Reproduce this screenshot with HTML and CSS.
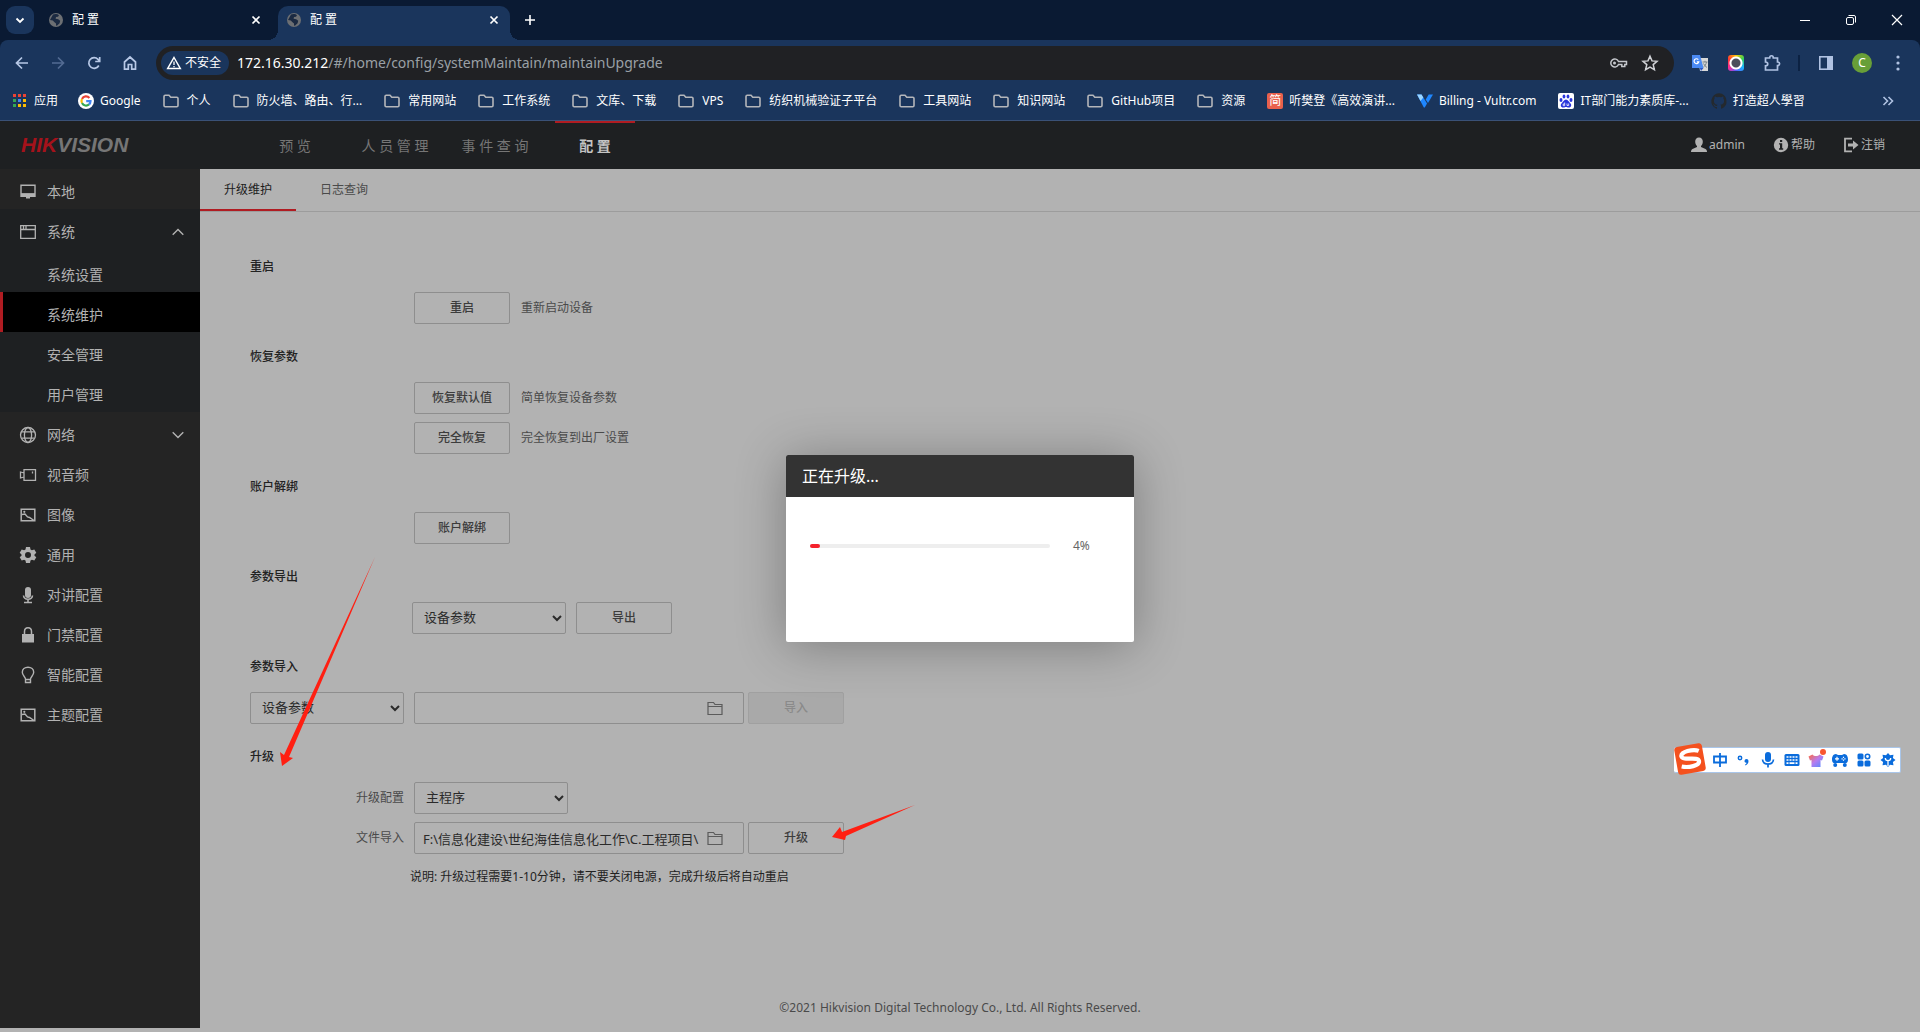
FILE: index.html
```html
<!DOCTYPE html>
<html lang="zh-CN">
<head>
<meta charset="utf-8">
<title>配 置</title>
<link rel="stylesheet" href="styles.css">
</head>
<body>
<svg class="defs" aria-hidden="true">
  <symbol id="i-folder" viewBox="0 0 16 16"><path d="M1 3.500c0-.8.4-1.200 1.200-1.200H6l1.800 2h6c.8 0 1.200.4 1.200 1.200v7c0 .8-.4 1.200-1.200 1.200H2.200c-.8 0-1.200-.4-1.200-1.200z" fill="none" stroke="#b4b6ba" stroke-width="1.600"/></symbol>
  <symbol id="i-globe" viewBox="0 0 16 16"><circle cx="8" cy="8" r="7" fill="#6c6f73"/><path d="M5 2.500c2-1 5-.6 6 .8l-1 1.400-2 .4-.4 1.600 2.600.6 2 1.400-.6 2.600-2.400 2.200-1.200.2v-2.200L6.200 10 4.800 8.400 2 8z" fill="#1b2a42"/></symbol>
  <symbol id="i-x" viewBox="0 0 16 16"><path d="M4.500 4.500l7 7M11.500 4.500l-7 7" stroke="currentColor" stroke-width="1.700" fill="none"/></symbol>
  <symbol id="i-pic" viewBox="0 0 18 18"><path d="M2.200 3.200h13.600v11.600H2.200z" fill="none" stroke="currentColor" stroke-width="1.500"/><path d="M3 8.500l3-.5 2.500 3 2 .5 4.500 3" fill="none" stroke="currentColor" stroke-width="1.400"/><circle cx="5.300" cy="5.800" r="1.100" fill="currentColor"/></symbol>
  <symbol id="i-file" viewBox="0 0 16 16"><path d="M1 14.500V2.500h5.500L8 4.500H15v10zM1 6.500h14" fill="none" stroke="#5b5b5b" stroke-width="1.200"/></symbol>
</svg>

<div class="browser">
  <div class="tabstrip">
    <button class="tab-search" aria-label="搜索标签页"><svg viewBox="0 0 16 16" class="ic16"><path d="M4.500 6.500L8 10l3.500-3.500" fill="none" stroke="#fff" stroke-width="1.800"/></svg></button>
    <div class="tab"><svg class="ic16"><use href="#i-globe"/></svg><span class="tab-title">配 置</span><button class="tab-close" aria-label="关闭"><svg class="ic16"><use href="#i-x"/></svg></button></div>
    <div class="tab tab-active"><svg class="ic16"><use href="#i-globe"/></svg><span class="tab-title">配 置</span><button class="tab-close" aria-label="关闭"><svg class="ic16"><use href="#i-x"/></svg></button></div>
    <button class="new-tab" aria-label="新标签页"><svg class="ic16" viewBox="0 0 16 16"><path d="M8 3v10M3 8h10" stroke="#fff" stroke-width="1.600"/></svg></button>
    <div class="win-controls">
      <button aria-label="最小化"><svg class="ic16" viewBox="0 0 16 16"><path d="M3 8.500h10" stroke="#fff"/></svg></button>
      <button aria-label="还原"><svg class="ic16" viewBox="0 0 16 16"><rect x="3.500" y="5.500" width="7" height="7" rx="1.500" fill="none" stroke="#fff"/><path d="M5.500 3.500h5.500a1.500 1.500 0 0 1 1.500 1.500v5.500" fill="none" stroke="#fff"/></svg></button>
      <button aria-label="关闭窗口"><svg class="ic16" viewBox="0 0 16 16"><path d="M3 3l10 10M13 3L3 13" stroke="#fff" stroke-width="1.200"/></svg></button>
    </div>
  </div>

  <div class="toolbar">
    <div class="nav-buttons">
      <button aria-label="后退"><svg class="ic16" viewBox="0 0 16 16"><path d="M14 8H3M8 2.500L2.500 8 8 13.500" fill="none" stroke="#b7c8e6" stroke-width="1.700"/></svg></button>
      <button aria-label="前进"><svg class="ic16" viewBox="0 0 16 16"><path d="M2 8h11M8 2.500L13.500 8 8 13.500" fill="none" stroke="#536b92" stroke-width="1.700"/></svg></button>
      <button aria-label="刷新"><svg class="ic16" viewBox="0 0 16 16"><path d="M12.800 10.500A5.300 5.300 0 1 1 12 4.400l1.500 1.600M13.700 2v4.500H9.200" fill="none" stroke="#b7c8e6" stroke-width="1.700"/></svg></button>
      <button aria-label="主页"><svg class="ic16" viewBox="0 0 16 16"><path d="M2.500 7L8 2l5.500 5v7.200H9.700V9.500H6.300v4.700H2.500z" fill="none" stroke="#b7c8e6" stroke-width="1.700"/></svg></button>
    </div>
    <div class="omnibox">
      <button class="security"><svg class="ic16" viewBox="0 0 16 16"><path d="M8 2.500L14.300 13.500H1.700z" fill="none" stroke="#fff" stroke-width="1.500"/><path d="M8 6.500v3.500M8 11v1.300" stroke="#fff" stroke-width="1.300"/></svg>不安全</button>
      <div class="url"><span class="host">172.16.30.212</span>/#/home/config/systemMaintain/maintainUpgrade</div>
      <button aria-label="密码"><svg class="ic18" viewBox="0 0 18 18"><path d="M9.500 7.500h8v3h-1.700v2h-3v-2H9.500a4 4 0 1 1 0-3z" fill="none" stroke="#c4c7cc" stroke-width="1.500"/><circle cx="5.500" cy="9" r="1.500" fill="#c4c7cc"/></svg></button>
      <button aria-label="收藏"><svg class="ic18" viewBox="0 0 18 18"><path d="M9 2.200l2 4.700 5 .4-3.800 3.300 1.200 5L9 13l-4.400 2.600 1.200-5L2 7.300l5-.4z" fill="none" stroke="#d0d2d6" stroke-width="1.500"/></svg></button>
    </div>
    <div class="extensions">
      <button aria-label="翻译"><svg class="ic18" viewBox="0 0 18 18"><path d="M7 4h10v13H9z" fill="#d8d8d8"/><path d="M1 1h8l3.500 13H1z" fill="#4a8af4"/><path d="M8.800 14h3.700L10 17z" fill="#2a56c6"/><path d="M7.300 5.600a2.400 2.400 0 1 0 .5 2.200H5.800" fill="none" stroke="#fff" stroke-width="1.200"/><path d="M11.500 8h5M14 6.800V8M15.500 8c-.5 2.500-1.500 4-3 5M12.500 9.500c.8 1.800 2 3 3.500 4" fill="none" stroke="#7a858c"/></svg></button>
      <button class="shot" aria-label="截图"><span></span></button>
      <button aria-label="扩展程序"><svg class="ic18" viewBox="0 0 18 18"><path d="M2.500 4h4.200c0-3 3.600-3 3.600 0h4.200v4c2.800 0 2.800 3.500 0 3.500v4.500h-12v-4.200c3 0 3-3.800 0-3.800z" fill="none" stroke="#b0c2e2" stroke-width="1.700"/></svg></button>
      <span class="divider"></span>
      <button aria-label="侧边栏"><svg class="ic18" viewBox="0 0 18 18"><rect x="2.800" y="2.800" width="12.400" height="12.400" fill="none" stroke="#b0c2e2" stroke-width="1.600"/><path d="M10 3h5v12h-5z" fill="#b0c2e2"/></svg></button>
      <button class="avatar">C</button>
      <button aria-label="菜单"><svg class="ic18" viewBox="0 0 18 18" fill="#b0c2e2"><circle cx="9" cy="3" r="1.600"/><circle cx="9" cy="9" r="1.600"/><circle cx="9" cy="15" r="1.600"/></svg></button>
    </div>
  </div>

  <nav class="bookmarks">
    <a href="#" class="apps"><svg class="ic16" viewBox="0 0 16 16"><path d="M1 1h3v3H1zM6 1h3v3H6zM11 1h3v3h-3z" fill="#ea4335"/><path d="M1 6h3v3H1z" fill="#34a853"/><path d="M6 6h3v3H6z" fill="#4285f4"/><path d="M11 6h3v3h-3zM11 11h3v3h-3zM6 11h3v3H6z" fill="#fbbc04"/><path d="M1 11h3v3H1z" fill="#34a853"/></svg>应用</a>
    <a href="#" class="site"><svg class="ic16" viewBox="0 0 16 16"><circle cx="8" cy="8" r="8" fill="#fff"/><g fill="none" stroke-width="2.200"><path d="M11.400 4.900A4.500 4.500 0 0 0 4 5.900" stroke="#ea4335"/><path d="M4 5.900a4.500 4.500 0 0 0 0 4.200" stroke="#fbbc04"/><path d="M4 10.100a4.500 4.500 0 0 0 7 1.300" stroke="#34a853"/><path d="M11 11.500A4.500 4.500 0 0 0 12.500 8.200H8.200" stroke="#4285f4"/></g></svg>Google</a>
    <a href="#"><svg class="ic16"><use href="#i-folder"/></svg>个人</a>
    <a href="#"><svg class="ic16"><use href="#i-folder"/></svg>防火墙、路由、行...</a>
    <a href="#"><svg class="ic16"><use href="#i-folder"/></svg>常用网站</a>
    <a href="#"><svg class="ic16"><use href="#i-folder"/></svg>工作系统</a>
    <a href="#"><svg class="ic16"><use href="#i-folder"/></svg>文库、下载</a>
    <a href="#"><svg class="ic16"><use href="#i-folder"/></svg>VPS</a>
    <a href="#"><svg class="ic16"><use href="#i-folder"/></svg>纺织机械验证子平台</a>
    <a href="#"><svg class="ic16"><use href="#i-folder"/></svg>工具网站</a>
    <a href="#"><svg class="ic16"><use href="#i-folder"/></svg>知识网站</a>
    <a href="#"><svg class="ic16"><use href="#i-folder"/></svg>GitHub项目</a>
    <a href="#"><svg class="ic16"><use href="#i-folder"/></svg>资源</a>
    <a href="#" class="site"><span class="jian">简</span>听樊登《高效演讲...</a>
    <a href="#" class="site"><svg class="ic16" viewBox="0 0 16 16"><path d="M0 1.500h4.500L10 10.500 7.800 14.500h-1z" fill="#1f87ff"/><path d="M0 1.500h4.500L6.300 4.500 3.500 8z" fill="#9ad4ff"/><path d="M8.700 6.500l3-5H16L11 10z" fill="#1f87ff"/></svg>Billing - Vultr.com</a>
    <a href="#" class="site"><svg class="ic16" viewBox="0 0 16 16"><rect width="16" height="16" rx="2" fill="#fff"/><g fill="#2a36dc"><ellipse cx="3" cy="7" rx="1.500" ry="2"/><ellipse cx="6" cy="3.500" rx="1.400" ry="2"/><ellipse cx="10" cy="3.500" rx="1.400" ry="2"/><ellipse cx="13" cy="7" rx="1.500" ry="2"/><path d="M8 6.500c2 0 3 2.500 4.500 4s.5 4-1.500 4-2-.5-3-.5-1 .5-3 .5-3-2.500-1.500-4 2.500-4 4.500-4z"/></g><path d="M6.700 9.500v3.200H5.200v-1.700h1.500M9 10.500v2h1.700v-2" fill="none" stroke="#fff" stroke-width=".8"/></svg>IT部门能力素质库-...</a>
    <a href="#" class="site"><svg class="ic16" viewBox="0 0 16 16"><path d="M8 .3a8 8 0 0 0-2.500 15.500c.4 0 .5-.2.500-.4v-1.500c-2.200.5-2.700-1-2.700-1-.4-.9-.9-1.100-.9-1.100-.7-.5.1-.5.100-.5.800.1 1.200.8 1.200.8.700 1.200 1.900.9 2.300.7.1-.5.300-.9.500-1.100-1.800-.2-3.600-.9-3.600-4 0-.9.300-1.600.8-2.100-.1-.2-.4-1 .1-2.100 0 0 .7-.2 2.200.8a7.400 7.400 0 0 1 4 0c1.500-1 2.200-.8 2.200-.8.400 1.100.2 1.900.1 2.100.5.600.8 1.300.8 2.100 0 3.100-1.900 3.700-3.700 3.900.3.300.6.800.6 1.500v2.200c0 .2.100.5.500.4A8 8 0 0 0 8 .3z" fill="#24292e"/></svg>打造超人學習</a>
    <button class="more" aria-label="更多书签"><svg class="ic16" viewBox="0 0 16 16"><path d="M3.500 4L7.500 8l-4 4M8.500 4l4 4-4 4" fill="none" stroke="#b0c2e2" stroke-width="1.600"/></svg></button>
  </nav>
</div>

<header class="app-header">
  <div class="logo"><span>HIK</span>VISION</div>
  <nav class="main-nav">
    <a href="#">预 览</a>
    <a href="#">人 员 管 理</a>
    <a href="#">事 件 查 询</a>
    <a href="#" class="current">配 置</a>
  </nav>
  <div class="account">
    <a href="#"><svg class="ic16" viewBox="0 0 16 16" fill="currentColor"><path d="M8 .5c2.500 0 3.800 1.800 3.800 4.200 0 1.800-.8 3.300-1.800 4.300v1l4.500 2c1 .5 1.500 1.500 1.500 3H0c0-1.500.5-2.500 1.500-3L6 10V9C5 8 4.200 6.500 4.200 4.700 4.200 2.300 5.500.5 8 .5z"/></svg>admin</a>
    <a href="#"><svg class="ic16" viewBox="0 0 16 16"><circle cx="8" cy="8" r="7.200" fill="currentColor"/><path d="M7 3h2.200v2H7zM6 6.300h3.200v5h1V12.700H6v-1.400h1V7.600H6z" fill="#1e2022"/></svg>帮助</a>
    <a href="#"><svg class="ic16" viewBox="0 0 16 16"><path d="M9 1.700H2v12.600h7" fill="none" stroke="currentColor" stroke-width="1.800"/><path d="M5 6.500h5V3.500L15.500 8 10 12.500v-3H5z" fill="currentColor"/></svg>注销</a>
  </div>
</header>

<div class="app-body">
  <nav class="sidebar">
    <a href="#" class="item"><svg class="ic18" viewBox="0 0 18 18"><path d="M2 2.200h14v11H2zM2 11h14" fill="none" stroke="currentColor" stroke-width="1.400"/><path d="M2 10.500h14v3H11v2H7v-2H2z" fill="currentColor"/></svg>本地</a>
    <div class="group">
      <a href="#" class="item"><svg class="ic18" viewBox="0 0 18 18"><path d="M1.700 2.700h14.600v12.600H1.700zM1.700 6.500h14.600M4.500 3v3M7 3v3" fill="none" stroke="currentColor" stroke-width="1.300"/></svg>系统<svg class="caret" viewBox="0 0 12 8"><path d="M.7 6.800L6 1.500l5.300 5.300" fill="none" stroke="currentColor" stroke-width="1.400"/></svg></a>
      <div class="children">
        <a href="#">系统设置</a>
        <a href="#" class="selected">系统维护</a>
        <a href="#">安全管理</a>
        <a href="#">用户管理</a>
      </div>
    </div>
    <a href="#" class="item"><svg class="ic18" viewBox="0 0 18 18"><g fill="none" stroke="currentColor" stroke-width="1.300"><circle cx="9" cy="9" r="7.500"/><ellipse cx="9" cy="9" rx="3.600" ry="7.500"/><path d="M2.500 5.800h13M2.500 12.200h13"/></g></svg>网络<svg class="caret" viewBox="0 0 12 8"><path d="M.7 1.200L6 6.500l5.300-5.300" fill="none" stroke="currentColor" stroke-width="1.400"/></svg></a>
    <a href="#" class="item"><svg class="ic18" viewBox="0 0 18 18"><path d="M5 3.700h11.500v10.600H5zM5 7L1.500 6v6L5 11M13.500 5.500v2" fill="none" stroke="currentColor" stroke-width="1.300"/></svg>视音频</a>
    <a href="#" class="item"><svg class="ic18"><use href="#i-pic"/></svg>图像</a>
    <a href="#" class="item"><svg class="ic18" viewBox="0 0 18 18"><path fill="currentColor" fill-rule="evenodd" d="M7 1h4l.5 2.400 1.400.8 2.400-.8 2 3.400L15.500 8.500v1.200l1.800 1.500-2 3.400-2.400-.8-1.400.8L11 17H7l-.5-2.400-1.400-.8-2.400.8-2-3.400L2.500 9.700V8.500L.7 6.800l2-3.400 2.400.8 1.400-.8zM9 6a3 3 0 1 0 0 6 3 3 0 0 0 0-6z"/></svg>通用</a>
    <a href="#" class="item"><svg class="ic18" viewBox="0 0 18 18"><rect x="6" y="1" width="6" height="11" rx="3" fill="currentColor"/><path d="M4.500 9.500c.5 5 8.500 5 9 0M9 13v3M5 16.500h8" fill="none" stroke="currentColor" stroke-width="1.600"/></svg>对讲配置</a>
    <a href="#" class="item"><svg class="ic18" viewBox="0 0 18 18"><path d="M3 8h12v8.500H3z" fill="currentColor"/><path d="M5.500 8V5.500c0-5 7-5 7 0V8" fill="none" stroke="currentColor" stroke-width="1.500"/></svg>门禁配置</a>
    <a href="#" class="item"><svg class="ic18" viewBox="0 0 18 18"><path d="M6.500 13c0-2-3.200-3.500-3.200-6.700C3.300 3.200 5.800 1.300 9 1.300s5.700 1.900 5.700 5c0 3.200-3.200 4.700-3.200 6.700v3.500h-5zM6.500 13.500h5" fill="none" stroke="currentColor" stroke-width="1.400"/></svg>智能配置</a>
    <a href="#" class="item"><svg class="ic18"><use href="#i-pic"/></svg>主题配置</a>
  </nav>

  <main class="content">
    <nav class="tabs"><a href="#" class="on">升级维护</a><a href="#">日志查询</a></nav>
    <form class="sections">
      <section>
        <h2>重启</h2>
        <div class="row indent"><button type="button" class="btn">重启</button><span class="hint">重新启动设备</span></div>
      </section>
      <section>
        <h2>恢复参数</h2>
        <div class="row indent"><button type="button" class="btn">恢复默认值</button><span class="hint">简单恢复设备参数</span></div>
        <div class="row indent"><button type="button" class="btn">完全恢复</button><span class="hint">完全恢复到出厂设置</span></div>
      </section>
      <section>
        <h2>账户解绑</h2>
        <div class="row indent"><button type="button" class="btn">账户解绑</button></div>
      </section>
      <section>
        <h2>参数导出</h2>
        <div class="row export"><select aria-label="参数导出"><option>设备参数</option></select><button type="button" class="btn">导出</button></div>
      </section>
      <section>
        <h2>参数导入</h2>
        <div class="row"><select aria-label="参数导入"><option>设备参数</option></select><div class="import"><div class="file"><input type="text" aria-label="导入文件"><svg class="ic16"><use href="#i-file"/></svg></div><button type="button" class="btn" disabled>导入</button></div></div>
      </section>
      <section>
        <h2>升级</h2>
        <div class="row"><label for="prog">升级配置</label><select id="prog"><option>主程序</option></select></div>
        <div class="row"><label for="path">文件导入</label><div class="import"><div class="file"><input type="text" id="path" value="F:\信息化建设\世纪海佳信息化工作\C.工程项目\"><svg class="ic16"><use href="#i-file"/></svg></div><button type="button" class="btn">升级</button></div></div>
        <p class="note">说明: 升级过程需要1-10分钟，请不要关闭电源，完成升级后将自动重启</p>
      </section>
    </form>
    <footer>©2021 Hikvision Digital Technology Co., Ltd. All Rights Reserved.</footer>
  </main>
</div>

<div class="dialog" role="dialog" aria-labelledby="dlg-title">
  <h3 id="dlg-title">正在升级...</h3>
  <div class="dialog-body"><div class="bar"><div class="fill" style="width:4%"></div></div><span>4%</span></div>
</div>

<svg class="marks" viewBox="0 0 640 290" aria-hidden="true"><path d="M95 2L9 202l4 1-11 8-2-14 4 3zM635 250l-69 31-1 4-13-3 8-10 2 5z" fill="#ff1f12"/></svg>

<div class="ime">
  <svg class="ime-logo" viewBox="0 0 32 32"><g transform="rotate(-10 16 16)"><rect x="2" y="2" width="28" height="28" rx="3" fill="#f4511e"/><path d="M26 9.500C21 6.500 7.500 7 8 12s16.500 2.500 16.500 7.500-11.500 5-18 2.500" fill="none" stroke="#fff" stroke-width="4.200"/></g></svg>
  <svg class="ic16" viewBox="0 0 16 16"><path d="M2 4.500h12v6H2zM8 1v14" fill="none" stroke="#0a6cdc" stroke-width="1.800"/></svg>
  <svg class="ic16" viewBox="0 0 16 16"><circle cx="4" cy="6" r="1.700" fill="none" stroke="#0a6cdc" stroke-width="1.500"/><path d="M8.500 9a2 2 0 1 1 4 0c0 2-1 3.500-3 4.500l-.5-1c1-.5 1.500-1 1.600-1.800C9.300 11 8.500 10 8.500 9z" fill="#0a6cdc"/></svg>
  <svg class="ic16" viewBox="0 0 16 16"><rect x="5" y="0" width="6" height="10" rx="3" fill="#0a6cdc"/><path d="M2.500 7.500c.5 6 10.500 6 11 0M8 12v3.500" fill="none" stroke="#0a6cdc" stroke-width="1.700"/></svg>
  <svg class="ic16" viewBox="0 0 16 16"><rect x=".5" y="2" width="15" height="12" rx="1.500" fill="#0a6cdc"/><path d="M2.500 5h11M2.500 8h11" stroke="#fff" stroke-width="1.700" stroke-dasharray="2 1"/><path d="M2.500 11.200h2M5.500 11.200h5M11.500 11.200h2" stroke="#fff" stroke-width="1.700"/></svg>
  <svg class="ic16" viewBox="0 0 16 16"><defs><linearGradient id="sh" x1="0" y1="0" x2="1" y2="1"><stop offset="0" stop-color="#ff6a3c"/><stop offset=".5" stop-color="#b67cf0"/><stop offset="1" stop-color="#4b8cff"/></linearGradient></defs><path d="M4.500 2.500c1.500 2 5.500 2 7 0l4 2-1.500 4-1.500-.5v7h-9V8L2 8.500.5 4.500z" fill="url(#sh)"/><circle cx="15" cy="0" r="3" fill="#f9562f"/></svg>
  <svg class="ic16" viewBox="0 0 16 16"><path d="M4 2l2 1h4l2-1c3 0 4 3 4 5.500 0 3-1.500 4-3.500 3.500h-9C1.500 11.500 0 10.500 0 7.500 0 5 1 2 4 2z" fill="#0a6cdc"/><path d="M5 4.800v4M3 6.800h4M9.500 6.800h1.200M12.300 6.800h1.200M11.500 4.800v1.200M11.500 7.600v1.200" stroke="#fff" stroke-width="1.200"/><circle cx="3.200" cy="13" r="2" fill="#0a6cdc"/><circle cx="12.800" cy="13" r="2" fill="#0a6cdc"/></svg>
  <svg class="ic16" viewBox="0 0 16 16" fill="#0a6cdc"><rect x="1.500" y="1.500" width="6" height="6" rx="1.500"/><rect x="8.500" y="8.500" width="6" height="6" rx="1.500"/><rect x="1.500" y="8.500" width="6" height="6" rx="1.500"/><circle cx="11.500" cy="4.500" r="2.200" fill="none" stroke="#0a6cdc" stroke-width="1.600"/></svg>
  <svg class="ic16" viewBox="0 0 16 16"><path d="M8 1l2 2.300 3.500-.5-.6 3.200 2.600 2-2.600 2 .6 3.200L10 12.700 8 15l-2-2.300-3.500.5.6-3.200L.5 8l2.600-2-.6-3.200 3.500.5z" fill="#0a6cdc"/><path d="M8 14V8.500M5.300 6c0 3.500 5.400 3.500 5.400 0" fill="none" stroke="#fff" stroke-width="1.300"/></svg>
</div>
</body>
</html>
```
FILE: styles.css
```css
* { box-sizing: border-box; }
body {
  margin: 0;
  min-height: 100vh;
  display: flex;
  flex-direction: column;
  position: relative;
  overflow-x: hidden;
  background: #b2b2b2;
  color: #4a4a4a;
  font: 12px/20px "Noto Sans", "Noto Sans CJK SC", sans-serif;
}
a { color: inherit; text-decoration: none; }
button {
  padding: 0;
  border: 0;
  background: none;
  color: inherit;
  font: inherit;
  display: flex;
  align-items: center;
  justify-content: center;
}
svg { display: block; flex: none; overflow: visible; }
.defs { position: absolute; width: 0; height: 0; }
.ic16 { width: 16px; height: 16px; }
.ic18 { width: 18px; height: 18px; }

/* Browser frame */
.browser { background: #0a1a33; color: #fff; border-bottom: 1px solid #3a5177; }
.tabstrip { display: flex; align-items: center; height: 40px; padding-left: 6px; }
.tab-search { width: 28px; height: 28px; border-radius: 9px; background: #1a355c; }
.tab { display: flex; align-items: center; gap: 8px; width: 232px; height: 34px; margin-top: 6px; padding: 0 8px 6px; position: relative; }
.tab-search + .tab { margin: 6px 6px 0; }
.tab-title { flex: 1; }
.tab-active { background: #1a355c; border-radius: 10px 10px 0 0; }
.tab-active::before,
.tab-active::after { content: ""; position: absolute; bottom: 0; width: 10px; height: 10px; }
.tab-active::before { left: -10px; background: radial-gradient(circle at 0 0, transparent 10px, #1a355c 10px); }
.tab-active::after { right: -10px; background: radial-gradient(circle at 100% 0, transparent 10px, #1a355c 10px); }
.new-tab { width: 28px; height: 28px; margin-left: 6px; }
.win-controls { display: flex; margin-left: auto; }
.win-controls button { width: 46px; height: 40px; }

.toolbar { display: flex; align-items: center; gap: 8px; height: 46px; padding: 0 4px; background: #1a355c; border-radius: 8px 8px 0 0; }
.nav-buttons { display: flex; }
.nav-buttons button { width: 36px; height: 34px; }
.omnibox { flex: 1; display: flex; align-items: center; height: 34px; padding: 0 8px 0 5px; border-radius: 17px; background: #202124; }
.omnibox > button:not(.security) { width: 32px; height: 32px; }
.security { height: 24px; gap: 3px; padding: 0 8px 0 5px; border-radius: 12px; background: #1a355c; }
.url { flex: 1; padding-left: 8px; font-size: 14px; color: #9aa0a6; }
.host { color: #fff; }
.extensions { display: flex; align-items: center; }
.extensions button { width: 36px; height: 34px; }
.divider { width: 2px; height: 16px; margin: 0 8px; background: #0c2243; }
.shot span { width: 16px; height: 16px; border-radius: 3px; background: radial-gradient(circle, #4a4f5c 4px, #fff 5px, #fff 6px, transparent 7px), conic-gradient(#ffc800, #31d158, #18b7ff, #5a5cff, #ff2d92, #ff3b30, #ffc800); }
.extensions .avatar { width: 20px; height: 20px; margin: 0 8px; border-radius: 50%; background: #689f38; }

.bookmarks { display: flex; align-items: center; gap: 22px; height: 34px; padding: 0 24px 4px 12px; background: #1a355c; white-space: nowrap; }
.bookmarks a { display: flex; align-items: center; gap: 8px; }
.bookmarks a.site,
.bookmarks a.apps { gap: 6px; }
.bookmarks a.apps { margin-right: -2px; }
.bookmarks .more { margin-left: auto; }
.jian { width: 16px; height: 16px; border-radius: 2px; background: #e8604c; line-height: 16px; text-align: center; }

/* Application header */
.app-header { display: flex; align-items: center; height: 48px; background: #1e2022; }
.logo { width: 245px; padding-left: 21px; font: italic bold 21px/24px "Liberation Sans", sans-serif; color: #767676; }
.logo span { color: #a5121b; }
.main-nav { display: flex; align-self: stretch; }
.main-nav a { width: 100px; text-align: center; font-size: 14px; line-height: 50px; color: #767676; }
.main-nav .current { color: #c4c4c4; font-weight: bold; background: linear-gradient(#b01c22, #b01c22) top / 80px 2px no-repeat; }
.account { display: flex; gap: 28px; margin-left: auto; padding-right: 35px; color: #b2b2b2; }
.account a { display: flex; align-items: center; gap: 2px; line-height: 22px; }

/* Side navigation */
.app-body { flex: 1; display: flex; }
.sidebar { width: 200px; margin-bottom: 4px; background: #242424; color: #b2b2b2; font-size: 14px; }
.item { display: flex; align-items: center; gap: 10px; height: 40px; padding: 6px 16px 0 19px; }
.caret { width: 12px; height: 8px; margin-left: auto; }
.group { background: #1e2022; }
.children { padding-top: 3px; }
.children a { display: block; height: 40px; padding: 4px 0 0 47px; line-height: 38px; }
.children .selected { padding-left: 44px; border-left: 3px solid #b01c22; background: #000; }

/* Main area */
.content { flex: 1; display: flex; flex-direction: column; min-width: 0; }
.tabs { display: flex; height: 43px; border-bottom: 1px solid #9c9c9c; }
.tabs a { padding: 0 24px; line-height: 42px; }
.tabs .on { height: 42px; color: #1c1c1c; border-bottom: 2px solid #b01c22; }
.sections { padding: 45px 50px 0; }
section { margin-bottom: 23px; }
h2 { margin: 0 0 15px; font-size: 12px; font-weight: 500; line-height: 20px; color: #222; }
.row { display: flex; align-items: center; gap: 10px; height: 32px; }
.row + .row { margin-top: 8px; }
.row.indent { padding-left: 164px; }
.row.export { padding-left: 162px; }
.row label { width: 154px; text-align: right; }
.hint { padding-left: 1px; }
.btn { width: 96px; height: 32px; border: 1px solid #8e8e8e; border-radius: 2px; color: #3c3c3c; font-weight: 500; line-height: 22px; }
.btn:disabled { background: #a9a9a9; border-color: #a0a0a0; color: #8a8a8a; }
select { width: 154px; height: 32px; padding: 0 0 2px 7px; border: 1px solid #8e8e8e; border-radius: 2px; background: transparent; color: #2a2a2a; font: 13px/20px "Noto Sans", "Noto Sans CJK SC", sans-serif; }
.import { display: flex; gap: 4px; }
.file { display: flex; align-items: center; gap: 3px; width: 330px; height: 32px; padding: 0 20px 0 8px; border: 1px solid #8e8e8e; border-radius: 2px; }
.file input { flex: 1; min-width: 0; height: 28px; padding: 0; border: 0; background: none; color: #2a2a2a; font: 13px/20px "Noto Sans", "Noto Sans CJK SC", sans-serif; }
.note { margin: 13px 0 0; padding-left: 160px; color: #222; }
footer { margin-top: auto; padding: 0 200px 14px 0; text-align: center; }

/* Upgrade progress */
.dialog { position: absolute; top: 455px; left: 50%; width: 348px; height: 187px; margin-left: -174px; border-radius: 2px; background: #fff; box-shadow: 0 4px 50px rgba(0, 0, 0, .3); overflow: hidden; }
.dialog h3 { margin: 0; padding: 0 16px; background: #333; color: #fff; font-size: 16px; font-weight: 400; line-height: 42px; }
.dialog-body { display: flex; align-items: center; gap: 23px; padding: 39px 24px; color: #666; }
.bar { width: 240px; height: 4px; border-radius: 2px; background: #eee; }
.fill { height: 100%; border-radius: 2px; background: #f5222d; }

/* Hand-drawn arrows */
.marks { position: absolute; left: 280px; top: 555px; width: 640px; height: 290px; pointer-events: none; }

/* Input method bar */
.ime { position: absolute; right: 19px; top: 747px; display: flex; align-items: center; gap: 8px; height: 26px; padding: 0 4px 0 0; border: 1px solid #a9c6ea; border-left: 0; border-radius: 2px; background: #fff; }
.ime-logo { width: 32px; height: 32px; margin: -3px -2px 0 0; }
```
